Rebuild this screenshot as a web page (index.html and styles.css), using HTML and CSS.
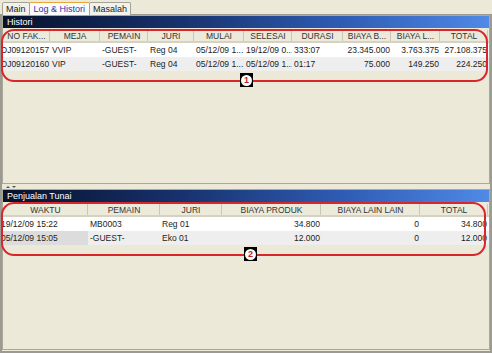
FILE: index.html
```html
<!DOCTYPE html>
<html>
<head>
    <title>Log &amp; Histori</title>
    <link rel="stylesheet" href="styles.css">
</head>
<body>
    <div class="window">
        <div class="tabs">
            <span class="tab">Main</span>
            <span class="tab active">Log &amp; Histori</span>
            <span class="tab">Masalah</span>
        </div>

        <div class="page">
            <section class="panel panel-top">
                <div class="caption">Histori</div>
                <div class="grid-wrap">
                    <div class="row head cols-histori">
                        <div>NO FAK...</div><div>MEJA</div><div>PEMAIN</div><div>JURI</div><div>MULAI</div>
                        <div>SELESAI</div><div>DURASI</div><div>BIAYA B...</div><div>BIAYA L...</div><div>TOTAL</div>
                    </div>
                    <div class="row odd cols-histori">
                        <div class="first">DJ09120157</div><div>VVIP</div><div>-GUEST-</div><div>Reg 04</div><div>05/12/09 1...</div>
                        <div>19/12/09 0...</div><div>333:07</div><div class="num">23.345.000</div><div class="num">3.763.375</div><div class="num">27.108.375</div>
                    </div>
                    <div class="row even cols-histori">
                        <div class="first">DJ09120160</div><div>VIP</div><div>-GUEST-</div><div>Reg 04</div><div>05/12/09 1...</div>
                        <div>05/12/09 1...</div><div>01:17</div><div class="num">75.000</div><div class="num">149.250</div><div class="num">224.250</div>
                    </div>
                    <div class="mark mark-1"></div>
                    <div class="badge badge-1"><span>1</span></div>
                </div>
            </section>

            <div class="splitter">
                <svg width="12" height="4" viewBox="0 0 12 4">
                    <path d="M1 3 L3 1 L5 3 Z" fill="#555"/>
                    <path d="M7 1 L11 1 L9 3 Z" fill="#555"/>
                </svg>
            </div>

            <section class="panel panel-bottom">
                <div class="caption">Penjualan Tunai</div>
                <div class="grid-wrap">
                    <div class="row head cols-tunai">
                        <div>WAKTU</div><div>PEMAIN</div><div>JURI</div><div>BIAYA PRODUK</div><div>BIAYA LAIN LAIN</div><div>TOTAL</div>
                    </div>
                    <div class="row odd cols-tunai">
                        <div class="first">19/12/09 15:22</div><div>MB0003</div><div>Reg 01</div><div class="num">34.800</div><div class="num">0</div><div class="num">34.800</div>
                    </div>
                    <div class="row even cols-tunai">
                        <div class="first focus">05/12/09 15:05</div><div>-GUEST-</div><div>Eko 01</div><div class="num">12.000</div><div class="num">0</div><div class="num">12.000</div>
                    </div>
                    <div class="mark mark-2"></div>
                    <div class="badge badge-2"><span>2</span></div>
                </div>
            </section>
        </div>
    </div>
</body>
</html>
```

FILE: styles.css
```css
body {
    margin: 0;
    background: #ece9d8;
    font-family: "Liberation Sans", Arial, sans-serif;
    font-size: 8.5px;
    color: #1c1c1c;
}
.window {
    width: 492px;
    height: 353px;
    overflow: hidden;
}
.tabs {
    display: flex;
    height: 15px;
    padding: 2px 0 0 2px;
    box-sizing: border-box;
    border-bottom: 1px solid #9c9b93;
    font-size: 9px;
}
.tab {
    height: 13px;
    line-height: 12px;
    padding: 0 3px;
    border: 1px solid #a4a39a;
    border-bottom: none;
    background: #f3f2ea;
    margin-right: -1px;
    border-radius: 2px 2px 0 0;
}
.tab.active {
    color: #2138a8;
    background: #fcfcfe;
    border-top: 1px solid #e8a53a;
    padding: 0 4px;
}
.page {
    height: 338px;
    display: flex;
    flex-direction: column;
    border-left: 2px solid #9c9b93;
    border-right: 2px solid #9c9b93;
    border-bottom: 2px solid #9c9b93;
    box-sizing: border-box;
}
.panel {
    border: 1px solid #aca899;
    box-sizing: border-box;
}
.panel-top {
    height: 169px;
}
.panel-bottom {
    flex: 1;
    margin-bottom: 1px;
}
.caption {
    height: 12px;
    line-height: 12px;
    padding-left: 4px;
    font-size: 9px;
    color: #fff;
    background: linear-gradient(90deg, #07122b 0%, #16306a 35%, #2f5cb4 70%, #5089e6 100%);
}
.grid-wrap {
    position: relative;
    margin-top: 2px;
}
.row {
    display: grid;
    height: 14px;
    line-height: 14px;
}
.row > div {
    white-space: nowrap;
    overflow: hidden;
    padding: 0 1px 0 2px;
}
.cols-histori {
    grid-template-columns: 47px 50px 48px 46px 50px 48px 51px 48px 49px 48px;
}
.cols-tunai {
    grid-template-columns: 85px 72px 62px 99px 99px 68px;
}
.row.head {
    height: 13px;
    line-height: 12px;
    background: #ebeadb;
    border-bottom: 2px solid #d6d2c2;
    box-sizing: border-box;
    color: #333;
}
.row.head > div {
    text-align: center;
    border-right: 1px solid #cbc7b8;
}
.row.odd {
    background: #fff;
}
.row.even {
    background: #eeeeee;
}
.row .num {
    text-align: right;
}
.row .first {
    padding-left: 0;
    text-indent: -2px;
}
.row .focus {
    background: #dcdcdc;
}
.splitter {
    height: 5px;
    padding-left: 3px;
    display: flex;
    align-items: center;
}
.splitter svg {
    display: block;
}
.mark {
    position: absolute;
    border: 2px solid #d8262a;
    border-radius: 13px;
}
.mark-1 {
    left: -2px;
    top: -1px;
    width: 483px;
    height: 49px;
}
.mark-2 {
    left: -2px;
    top: -2px;
    width: 481px;
    height: 50px;
}
.badge {
    position: absolute;
    width: 13px;
    height: 14px;
    background: #000;
    display: flex;
    align-items: center;
    justify-content: center;
}
.badge span {
    width: 11px;
    height: 11px;
    border-radius: 50%;
    background: #fff;
    color: #c0222a;
    font-weight: bold;
    font-size: 9px;
    line-height: 11px;
    text-align: center;
}
.badge-1 {
    left: 237px;
    top: 43px;
}
.badge-2 {
    left: 241px;
    top: 43px;
}
```
